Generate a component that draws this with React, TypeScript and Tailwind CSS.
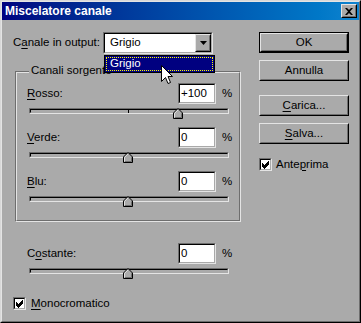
import React from "react";

const F = { fontFamily: '"Liberation Sans", Arial, sans-serif' };

function U({ children }: { children: React.ReactNode }) {
  return <span className="underline underline-offset-[2px] decoration-1">{children}</span>;
}

function Input({ value }: { value: string }) {
  return (
    <div className="w-[38px] h-[21px] border border-t-[#6e6e6e] border-l-[#6e6e6e] border-r-[#e4e4e4] border-b-[#e4e4e4]">
      <div className="w-full h-full bg-white border border-t-black border-l-black border-r-[#a9a9a9] border-b-[#a9a9a9] flex items-center pl-[1px] text-[11.5px] text-black leading-none">
        {value}
      </div>
    </div>
  );
}

function Thumb() {
  return (
    <svg width="10" height="11" viewBox="0 0 10 11">
      <polygon points="5,0.5 9.5,5 9.5,10.5 0.5,10.5 0.5,5" fill="#aaaaaa" stroke="#000" strokeWidth="1" />
      <polyline points="1.5,9.5 1.5,5.4 5,1.9" fill="none" stroke="#e4e4e4" strokeWidth="1" />
      <polyline points="2,9.5 8.5,9.5 8.5,5.4" fill="none" stroke="#6e6e6e" strokeWidth="1" />
    </svg>
  );
}

function Slider({ pos }: { pos: number }) {
  return (
    <div className="relative w-[200px] h-[6px] border border-t-[#6e6e6e] border-l-[#6e6e6e] border-r-[#e4e4e4] border-b-[#e4e4e4]">
      <div className="w-full h-full border border-t-black border-l-black border-r-[#a9a9a9] border-b-[#a9a9a9] bg-[#aaaaaa]" />
      <div className="absolute left-[98px] top-0 w-px h-[4px] bg-black" />
      <div className="absolute top-[-1px]" style={{ left: pos - 5 }}>
        <Thumb />
      </div>
    </div>
  );
}

function Row({ label, value, pos, mt }: { label: React.ReactNode; value: string; pos: number; mt: string }) {
  return (
    <div className={mt}>
      <div className="flex items-center">
        <div className="w-[151px] whitespace-nowrap text-[11.5px] text-black leading-none">{label}</div>
        <Input value={value} />
        <div className="ml-[6px] text-[11.5px] text-black leading-none">%</div>
      </div>
      <div className="mt-[4px] ml-[2px]">
        <Slider pos={pos} />
      </div>
    </div>
  );
}

function Button({ children, def, mt }: { children: React.ReactNode; def?: boolean; mt: string }) {
  const inner = (
    <div className="w-full h-full border border-t-[#e4e4e4] border-l-[#e4e4e4] border-r-black border-b-black">
      <div className="w-full h-full border border-t-[#aaaaaa] border-l-[#aaaaaa] border-r-[#6e6e6e] border-b-[#6e6e6e] flex items-center justify-center whitespace-nowrap text-[11.5px] text-black leading-none">
        {children}
      </div>
    </div>
  );
  return (
    <div className={`${mt} w-[90px] h-[21px] ${def ? "border border-black" : ""}`}>{inner}</div>
  );
}

function Check() {
  return (
    <div className="w-[13px] h-[13px] border border-t-[#6e6e6e] border-l-[#6e6e6e] border-r-[#e4e4e4] border-b-[#e4e4e4]">
      <div className="w-full h-full bg-white border border-t-black border-l-black border-r-[#a9a9a9] border-b-[#a9a9a9] relative">
        <svg width="9" height="9" viewBox="0 0 9 9" className="absolute left-0 top-0">
          <path d="M1 3.5 L3.5 6 L8 1.5 M1 4.5 L3.5 7 L8 2.5 M1 5.5 L3.5 8 L8 3.5" stroke="#000" strokeWidth="1" fill="none" shapeRendering="crispEdges" />
        </svg>
      </div>
    </div>
  );
}

export default function App() {
  return (
    <div style={F} className="relative w-[361px] h-[323px] bg-[#aaaaaa] border border-t-[#d8d8d8] border-l-[#d8d8d8] border-r-black border-b-black select-none overflow-hidden">
      <div className="w-full h-full border border-t-[#e4e4e4] border-l-[#e4e4e4] border-r-[#6e6e6e] border-b-[#6e6e6e] flex flex-col">
        {/* title bar */}
        <div className="h-[18px] flex items-center justify-between bg-gradient-to-r from-[#000080] to-[#1084d0] pl-[3px] pr-[2px]">
          <span className="text-white font-bold text-[12px] leading-none whitespace-nowrap">Miscelatore canale</span>
          <div className="w-[16px] h-[14px] border border-t-[#e4e4e4] border-l-[#e4e4e4] border-r-black border-b-black">
            <div className="w-full h-full border border-r-[#6e6e6e] border-b-[#6e6e6e] border-t-[#aaaaaa] border-l-[#aaaaaa] bg-[#aaaaaa] flex items-center justify-center">
              <svg width="8" height="7" viewBox="0 0 8 7">
                <path d="M0 0 L2 0 L4 2 L6 0 L8 0 L5 3.5 L8 7 L6 7 L4 5 L2 7 L0 7 L3 3.5 Z" fill="#000" />
              </svg>
            </div>
          </div>
        </div>

        {/* body */}
        <div className="flex pl-[11px]">
          {/* left column */}
          <div className="w-[230px] flex flex-col">
            <div className="mt-[12px] flex items-center h-[22px]">
              <div className="w-[90px] whitespace-nowrap text-[11.5px] text-black leading-none">
                C<U>a</U>nale in output:
              </div>
              <div className="w-[110px] h-[22px] border border-t-[#6e6e6e] border-l-[#6e6e6e] border-r-[#e4e4e4] border-b-[#e4e4e4]">
                <div className="w-full h-full bg-white border border-t-black border-l-black border-r-[#a9a9a9] border-b-[#a9a9a9] flex items-center justify-between">
                  <span className="pl-[5px] text-[11.5px] text-black leading-none">Grigio</span>
                  <div className="w-[16px] h-[18px] border border-t-[#e4e4e4] border-l-[#e4e4e4] border-r-black border-b-black">
                    <div className="w-full h-full bg-[#aaaaaa] border border-t-[#aaaaaa] border-l-[#aaaaaa] border-r-[#6e6e6e] border-b-[#6e6e6e] flex items-center justify-center">
                      <svg width="7" height="4" viewBox="0 0 7 4">
                        <path d="M0 0 H7 L3.5 4 Z" fill="#000" />
                      </svg>
                    </div>
                  </div>
                </div>
              </div>
            </div>

            {/* group box */}
            <div className="relative mt-[17px] ml-[2px] w-[226px] h-[151px] border border-[#6e6e6e] border-r-[#e4e4e4] border-b-[#e4e4e4]">
              <div className="w-full h-full border border-[#e4e4e4] border-r-[#6e6e6e] border-b-[#6e6e6e] pl-[10px] pt-[10px]">
                <Row label={<><U>R</U>osso:</>} value="+100" pos={148} mt="" />
                <Row label={<><U>V</U>erde:</>} value="0" pos={98} mt="mt-[13px]" />
                <Row label={<><U>B</U>lu:</>} value="0" pos={98} mt="mt-[13px]" />
              </div>
              <div className="absolute top-[-7px] left-[13px] px-[2px] bg-[#aaaaaa] whitespace-nowrap text-[11.5px] text-black leading-none">
                Canali sorgente
              </div>
            </div>

            <div className="ml-[2px] pl-[12px]">
              <Row label={<>C<U>o</U>stante:</>} value="0" pos={98} mt="mt-[21px]" />
            </div>

            <div className="mt-[23px] flex items-center">
              <Check />
              <span className="ml-[5px] whitespace-nowrap text-[11.5px] text-black leading-none">
                <U>M</U>onocromatico
              </span>
            </div>
          </div>

          {/* right column */}
          <div className="ml-[16px] flex flex-col">
            <Button def mt="mt-[12px]">OK</Button>
            <Button mt="mt-[7px]">Annulla</Button>
            <Button mt="mt-[14px]">
              <U>C</U>arica...
            </Button>
            <Button mt="mt-[7px]">
              <U>S</U>alva...
            </Button>
            <div className="mt-[14px] flex items-center">
              <Check />
              <span className="ml-[4px] whitespace-nowrap text-[11.5px] text-black leading-none">
                Ante<U>p</U>rima
              </span>
            </div>
          </div>
        </div>
      </div>

      {/* dropdown list overlay */}
      <div className="absolute left-[103px] top-[54px] w-[111px] h-[18px] border border-black bg-[#000080] p-[1px]">
        <div className="w-full h-full border border-dotted border-[#ffff00] flex items-center pl-[3px] text-[11.5px] text-white leading-none">
          Grigio
        </div>
      </div>

      {/* mouse cursor */}
      <svg className="absolute left-[160px] top-[64px]" width="12" height="20" viewBox="0 0 12 20">
        <path d="M0.5 0.5 L0.5 16.5 L4.5 12.5 L7 18.5 L9.5 17.5 L7 11.5 L11.5 11.5 Z" fill="#fff" stroke="#000" strokeWidth="1" />
      </svg>
    </div>
  );
}
